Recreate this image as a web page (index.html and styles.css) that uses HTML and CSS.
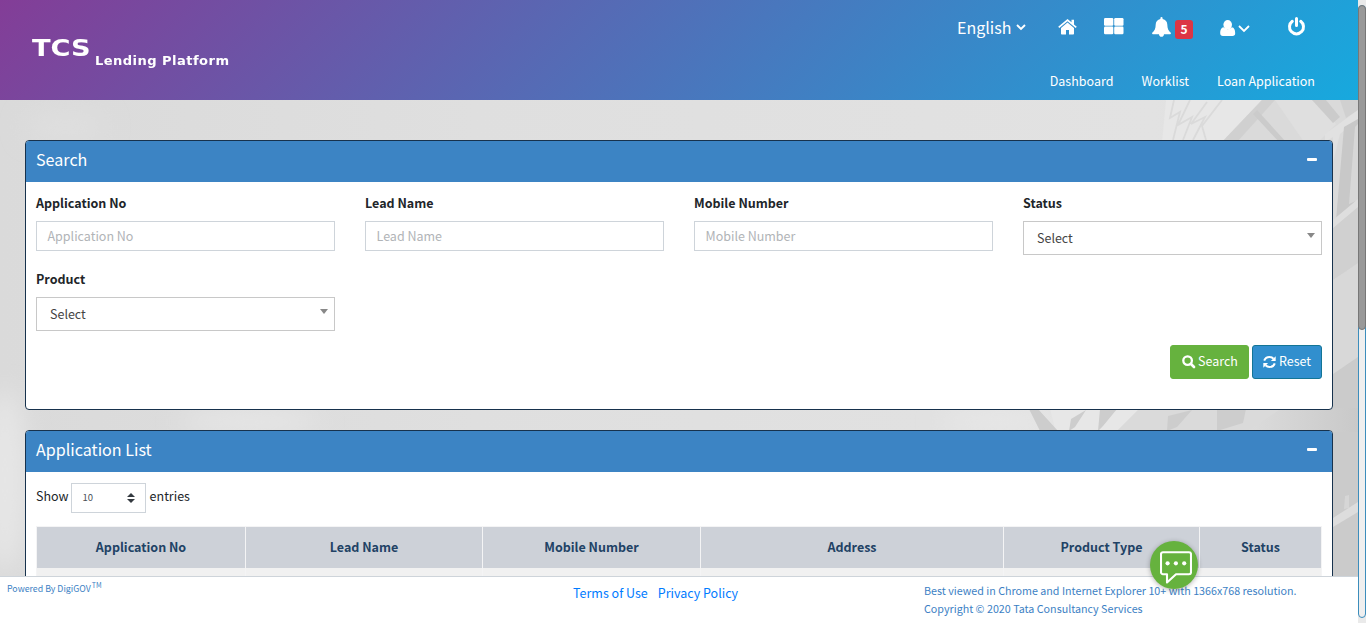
FILE: index.html
```html
<!DOCTYPE html>
<html lang="en">
<head>
<meta charset="utf-8">
<title>TCS Lending Platform</title>
<link rel="stylesheet" href="styles.css">
</head>
<body>
<div class="page">
  <svg class="backdrop" viewBox="0 0 1358 476" preserveAspectRatio="none" aria-hidden="true">
    <defs>
      <linearGradient id="haze" x1="0" y1="0" x2="1" y2="0"><stop offset="0" stop-color="#dadada"/><stop offset=".35" stop-color="#dfdfdf"/><stop offset=".85" stop-color="#e2e2e2"/><stop offset="1" stop-color="#d8d8d8"/></linearGradient>
      <linearGradient id="wall" x1="0" y1="0" x2="1" y2="0"><stop offset="0" stop-color="#dcdcdc"/><stop offset="1" stop-color="#c9c9c9"/></linearGradient>
      <filter id="soft"><feGaussianBlur stdDeviation="12"/></filter>
      <filter id="fine"><feGaussianBlur stdDeviation=".7"/></filter>
    </defs>
    <path fill="url(#haze)" d="M0 0h1358v476H0z"/>
    <g filter="url(#soft)"><ellipse cx="65" cy="27" rx="40" ry="14" fill="#dfdfdf"/><ellipse cx="5" cy="380" rx="22" ry="90" fill="#e6e6e6"/><ellipse cx="250" cy="322" rx="70" ry="10" fill="#e8e8e8"/><ellipse cx="1000" cy="322" rx="60" ry="10" fill="#e8e8e8"/></g>
    <g filter="url(#fine)">
      <path fill="#e7e7e7" d="M1166 0h96l-40 42h-60z"/>
      <path stroke="#dadada" stroke-width="1.800" fill="none" d="M1174 0l-4 18 10-6-7 28M1190 0l-12 25 14-8-9 23M1207 2l-16 22 14-7-12 23M1222 0l-20 26 4 14"/>
      <path fill="#dadada" d="M1262 0h96v130h-25V42h-111z"/>
      <path fill="#d0d0d0" d="M1262 0h13l-38 42h-15z"/>
      <path fill="#cbcbcb" d="M1257 10l-4 4 26 28h7z"/>
      <path fill="#dfdfdf" d="M1275 0h37l24 24-18 18h-14z"/>
      <path fill="#cbcbcb" d="M1312 0h14l14 17-7 6z"/>
      <path fill="#d0d0d0" d="M1340 0h18v10l-12 8z"/>
      <path fill="#e1e1e1" d="M1358 10v9l-18 15-7 28v-25l-8 5v-8z"/>
      <path fill="#c8c8c8" d="M1344 27l14-8v80l-22 21z"/>
      <path fill="#d7d7d7" d="M1355 27l3-3v76l-9 4z"/>
      <path fill="#d0d0d0" d="M1333 128l25-22v58l-25 16z"/>
      <path fill="#dedede" d="M1333 120l25-21v8l-25 21z"/>
      <path fill="#d8d8d8" d="M1333 180l25-17v95l-25 16z"/>
      <path fill="#cbcbcb" d="M1333 274l25-17v219h-25z"/>
      <path fill="#e7e7e7" d="M1050 308h90l-24 24h-60z"/>
      <path fill="#dadada" d="M1140 308h150l-40 24h-134z"/>
      <path fill="url(#wall)" d="M1282 308h76v24h-112z"/>
      <path fill="#cdcdcd" d="M1029 309h9l20 22h-18zM1071 319l15-9-11 17-6 4zM1100 309h17l-14 17-5 5zM1168 316l24-6-15 17-10 4zM1217 309h29l-3 14-26 8z"/>
      <path fill="#dddddd" d="M1333 418l25-16v10l-25 15z"/>
      <path fill="#d6d6d6" d="M1345 396l4-1v13l-5 1z"/>
    </g>
  </svg>

  <header class="topbar">
    <div class="logo"><span class="logo-main">TCS</span><span class="logo-sub">Lending Platform</span></div>
    <div class="topnav">
      <div class="tools">
        <span class="lang"><span class="lang-text">English</span><svg width="10" height="8" viewBox="0 0 10 8"><path d="M1 2l4 4 4-4" fill="none" stroke="#fff" stroke-width="1.900"/></svg></span>
        <svg class="ic-home" width="19" height="16" viewBox="0 0 19 16" fill="#fff"><path d="M9.500 3.600L3 9V14.700q0 .8.800.8H8V11h3v4.500h4.200q.8 0 .8-.8V9z"/><path d="M9.500 0L.2 7.700l1.100 1.300 8.200-6.800L17.700 9l1.100-1.300-2.800-2.300V.8h-2.500v2.500z"/></svg>
        <svg class="ic-grid" width="20" height="17" viewBox="0 0 20 17" fill="#fff"><rect width="9.300" height="7.700" rx="1.200"/><rect x="10.200" width="9.300" height="7.700" rx="1.200"/><rect y="8.500" width="9.300" height="7.700" rx="1.200"/><rect x="10.200" y="8.500" width="9.300" height="7.700" rx="1.200"/></svg>
        <svg class="ic-bell" width="20" height="20" viewBox="0 0 20 20" fill="#fff"><path d="M9.500 0q1.100 0 1.100 1.300v.6c3 .5 4.600 2.700 4.700 5.700.1 4.200 1 6.300 3.700 8.400-.1 1-.6 1.300-1.300 1.300H1.300C.6 17.300.1 17 0 16c2.700-2.100 3.600-4.200 3.700-8.400.1-3 1.700-5.200 4.700-5.700v-.6Q8.400 0 9.500 0zM7 17.200h5c0 1.500-1 2.600-2.500 2.600S7 18.700 7 17.200z"/></svg>
        <span class="badge">5</span>
        <svg class="ic-user" width="16" height="17" viewBox="0 0 16 17" fill="#fff"><ellipse cx="7.700" cy="4.800" rx="4.300" ry="4.800"/><path d="M3.600 7.300C1.200 7.500.2 10.300.2 13.300c0 1.800 1 2.800 2.700 2.800h9.600c1.700 0 2.700-1 2.700-2.800 0-3-1-5.800-3.400-6-1.100 1.300-2.500 2-4.100 2s-2.900-.7-4.100-2z"/></svg>
        <svg class="ic-down" width="12" height="8" viewBox="0 0 12 8"><path d="M1 1l5 5 5-5" fill="none" stroke="#fff" stroke-width="1.800"/></svg>
        <svg class="ic-power" width="19" height="19" viewBox="0 0 19 19" fill="none" stroke="#fff" stroke-width="3" stroke-linecap="round"><path d="M5.300 4.300A7 7 0 1 0 13.700 4.300M9.500 1.600v6.900"/></svg>
      </div>
      <nav class="menu"><a>Dashboard</a><a>Worklist</a><a>Loan Application</a></nav>
    </div>
  </header>

  <main class="content">
    <section class="panel search-panel">
      <div class="panel-head"><h2>Search</h2><span class="minus"></span></div>
      <div class="fields">
        <div class="field"><label>Application No</label><div class="input">Application No</div></div>
        <div class="field"><label>Lead Name</label><div class="input">Lead Name</div></div>
        <div class="field"><label>Mobile Number</label><div class="input">Mobile Number</div></div>
        <div class="field"><label>Status</label><div class="select"><span>Select</span><i class="caret"></i></div></div>
        <div class="field"><label>Product</label><div class="select"><span>Select</span><i class="caret"></i></div></div>
      </div>
      <div class="actions">
        <button class="btn btn-search"><svg width="14" height="14" viewBox="0 0 14 14" fill="none" stroke="#fff"><circle cx="5.600" cy="5.600" r="4.300" stroke-width="2.300"/><path d="M9 9l3 3" stroke-width="2.700" stroke-linecap="round"/></svg><span>Search</span></button>
        <button class="btn btn-reset"><svg width="13" height="12" viewBox="0 0 13 12"><g fill="none" stroke="#fff" stroke-width="2"><path d="M1.200 4.700C2 2.500 4 1 6.500 1c1.600 0 2.900.6 4 1.700M11.800 7.300C11 9.500 9 11 6.500 11c-1.600 0-2.900-.6-4-1.700"/></g><path fill="#fff" d="M12.700.2v4.800H7.900zM.3 11.800V7h4.800z"/></svg><span>Reset</span></button>
      </div>
    </section>

    <section class="panel list-panel">
      <div class="panel-head"><h2>Application List</h2><span class="minus"></span></div>
      <div class="length"><span>Show</span><div class="count"><span>10</span><svg width="8" height="10" viewBox="0 0 8 10" fill="#343a40"><path d="M0 4l4-4 4 4zM0 6h8l-4 4z"/></svg></div><span>entries</span></div>
      <div class="table">
        <div class="th">Application No</div><div class="th">Lead Name</div><div class="th">Mobile Number</div><div class="th">Address</div><div class="th">Product Type</div><div class="th">Status</div>
        <div class="td"></div><div class="td"></div><div class="td"></div><div class="td"></div><div class="td"></div><div class="td"></div>
      </div>
    </section>
  </main>

  <footer class="footer">
    <div class="powered">Powered By DigiGOV<span class="tm">TM</span></div>
    <div class="links"><a>Terms of Use</a><a>Privacy Policy</a></div>
    <div class="legal"><div>Best viewed in Chrome and Internet Explorer 10+ with 1366x768 resolution.</div><div>Copyright © 2020 Tata Consultancy Services</div></div>
  </footer>

  <div class="chat"><svg width="32" height="34" viewBox="0 0 32 34"><path d="M3 1.200h26a2 2 0 0 1 2 2v18a2 2 0 0 1-2 2H16L7 31.500v-8.300H3a2 2 0 0 1-2-2v-18a2 2 0 0 1 2-2z" fill="none" stroke="#fff" stroke-width="2.100" stroke-linejoin="round"/><g fill="#fff"><circle cx="7.600" cy="12.300" r="2.100"/><circle cx="15.900" cy="12.300" r="2.100"/><circle cx="24.200" cy="12.300" r="2.100"/></g></svg></div>
</div>
<div class="scroll"><div class="track"></div><div class="thumb"></div></div>
</body>
</html>
```
FILE: styles.css
```css
* { box-sizing: border-box; }
body {
  margin: 0;
  width: 1366px;
  height: 623px;
  overflow: hidden;
  display: flex;
  font-family: "Noto Sans CJK SC", "Open Sans", sans-serif;
  font-size: 12.5px;
  line-height: 20px;
  color: #212529;
}
.page { position: relative; width: 1358px; height: 623px; display: flex; flex-direction: column; overflow: hidden; }
.backdrop { position: absolute; left: 0; top: 100px; width: 1358px; height: 476px; }

.topbar {
  position: relative;
  height: 100px;
  flex: none;
  display: flex;
  justify-content: space-between;
  padding: 0 43px 0 32px;
  color: #fff;
  background: linear-gradient(135deg, #833d97, #17a9de);
}
.logo { display: flex; align-items: flex-start; padding-top: 36px; font-family: "DejaVu Sans", sans-serif; font-weight: bold; }
.logo span { transform-origin: 0 0; }
.logo-main { font-size: 22.5px; line-height: 24px; width: 63px; transform: scaleX(1.21); }
.logo-sub { font-size: 12px; line-height: 16px; padding-top: 17px; letter-spacing: .4px; white-space: nowrap; transform: scaleX(1.09); }
.topnav { display: flex; flex-direction: column; align-items: flex-end; }
.tools { display: flex; align-items: flex-start; height: 70px; padding: 17px 9px 0 0; }
.lang { display: flex; align-items: flex-start; height: 22px; font-size: 16px; }
.lang-text { width: 59px; line-height: 20px; }
.lang svg { margin-top: 6px; }
.ic-home { margin: 2px 0 0 32px; }
.ic-grid { margin: 1px 0 0 27px; }
.ic-bell { margin-left: 28px; }
.badge { margin: 3px 0 0 3px; width: 18px; height: 19px; border-radius: 3px; background: #dc3545; font-weight: bold; font-size: 12px; line-height: 18px; text-align: center; }
.ic-user { margin: 3px 0 0 27px; }
.ic-down { margin: 8px 0 0 2px; }
.ic-power { margin: 0 0 0 37px; }
.menu { display: flex; gap: 28px; padding-top: 1px; }

.content { position: relative; height: 476px; flex: none; padding: 40px 25px 0; overflow: hidden; display: flex; flex-direction: column; gap: 20px; }
.panel { background: #fff; border: 1px solid #17324d; border-radius: 4px; overflow: hidden; flex: none; }
.search-panel { height: 270px; }
.list-panel { height: 300px; }
.panel-head { height: 41px; display: flex; justify-content: space-between; padding: 0 15px 0 10px; background: #3c84c4; color: #fff; }
.panel-head h2 { margin: 0; font-size: 16.1px; font-weight: 400; line-height: 36px; }
.minus { width: 10px; height: 3px; margin-top: 17px; border-radius: 1px; background: #fff; }
.fields { display: grid; grid-template-columns: repeat(4, 299px); column-gap: 30px; grid-auto-rows: 76px; padding: 11px 10px 0; }
.field label { display: block; height: 28px; font-weight: bold; line-height: 20px; }
.input { height: 30px; border: 1px solid #ced4da; padding: 0 10.5px; line-height: 28px; color: #b1b4b7; }
.select { height: 34px; border: 1px solid #c8c8c8; padding: 0 6px 0 13px; line-height: 32px; color: #444; display: flex; justify-content: space-between; }
.caret { border: 4px solid transparent; border-top: 5px solid #888; border-bottom: 0; height: 0; margin-top: 11px; }
.actions { display: flex; justify-content: flex-end; gap: 3px; padding: 0 10px; }
.btn { height: 34px; border-radius: 3px; border: 1px solid; display: flex; align-items: center; color: #fff; font: inherit; padding: 0 0 2px; white-space: nowrap; }
.btn svg { position: relative; top: .5px; }
.btn-search { width: 79px; padding-left: 11px; gap: 2px; background: #66b23e; border-color: #66b23e; }
.btn-reset { width: 70px; padding-left: 10px; gap: 3px; background: #318fce; border-color: #137596; }

.length { display: flex; align-items: flex-start; padding: 11px 10px 0; height: 54px; line-height: 25px; }
.count { display: flex; align-items: center; justify-content: space-between; width: 75px; height: 30px; margin: 0 4px 0 2px; padding: 0 10px 0 11px; border: 1px solid #ced4da; color: #495057; font-size: 9.5px; }
.count span { padding-bottom: 1px; }
.table { display: grid; grid-template-columns: 208px 236px 217px 302px 195px 121px; grid-template-rows: 41px 30px; gap: 1px; row-gap: 0; width: 1286px; margin-left: 10px; padding: 1px; background: #f4f4f5; }
.th { background: #cdd1d8; color: #214265; font-weight: bold; text-align: center; line-height: 39px; }
.td { background: #f1f1f1; }

.footer { position: relative; height: 47px; flex: none; display: flex; background: #fff; border-top: 1px solid #ced4da; color: #3c7fc4; }
.powered { width: 573px; padding: 2px 0 0 7px; font-size: 8.8px; }
.tm { font-size: 7px; position: relative; top: -4px; margin-left: 1px; }
.links { width: 351px; display: flex; gap: 10px; padding-top: 6px; color: #007bff; }
.legal { font-size: 10.73px; line-height: 18px; padding-top: 5px; white-space: nowrap; }
.chat { position: absolute; left: 1150px; top: 541px; width: 48px; height: 48px; border-radius: 50%; background: #66b23e; box-shadow: 0 1px 5px rgba(0, 0, 0, .3); padding: 10px 0 0 10px; }
.chat svg { display: block; }

.scroll { position: relative; width: 8px; height: 623px; background: #eaeaea; }
.track { position: absolute; left: 0; top: 5px; width: 8px; height: 613px; border: 1px solid #3c8dbc; border-radius: 4px; background: #efefef; }
.thumb { position: absolute; left: 0; top: 5px; width: 8px; height: 325px; border: 1px solid #777; border-radius: 4px; background: #999; }
```
